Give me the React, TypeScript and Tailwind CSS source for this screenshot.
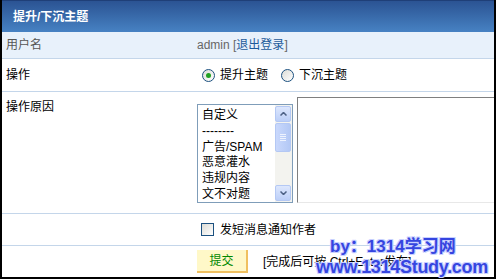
import React from "react";

const font = { fontFamily: '"Liberation Sans", "Noto Sans CJK SC", sans-serif' };

function Radio({ checked }: { checked?: boolean }) {
  return (
    <span className="relative inline-flex h-[13px] w-[13px] shrink-0 items-center justify-center rounded-full border border-[#1c5180] bg-gradient-to-br from-[#dcdcd6] to-white">
      {checked && <span className="h-[5px] w-[5px] rounded-full bg-[#21a121]" />}
    </span>
  );
}

const wm = {
  fontFamily: '"Liberation Sans", "Noto Sans CJK SC", sans-serif',
  textShadow: "1px 1px 0 #c8d0ff, -1px -1px 0 #c8d0ff, 1px -1px 0 #c8d0ff, -1px 1px 0 #c8d0ff",
};

export default function App() {
  const items = ["自定义", "--------", "广告/SPAM", "恶意灌水", "违规内容", "文不对题"];
  return (
    <div className="relative h-[279px] w-[496px] overflow-hidden bg-white text-[12px] leading-none" style={font}>
      <div className="flex h-full w-full flex-col border-b-2 border-l-2 border-r-2 border-black">
        {/* header */}
        <div className="flex h-[32px] shrink-0 items-center border-t border-[#1f3f78] bg-gradient-to-b from-[#2b5393] to-[#4782c3] pl-[11px] font-bold text-white">
          提升/下沉主题
        </div>
        {/* row 1 */}
        <div className="flex h-[27px] shrink-0 items-center border-b border-[#c4d6ea] bg-[#e8f1fb]">
          <div className="w-[195px] shrink-0 pl-[4px] text-[#555]">用户名</div>
          <div className="text-[#666]">
            admin [<span className="text-[#1c5a9a]">退出登录</span>]
          </div>
        </div>
        {/* row 2 */}
        <div className="flex h-[33px] shrink-0 items-center border-b border-[#c4d6ea]">
          <div className="w-[195px] shrink-0 pl-[4px] text-black">操作</div>
          <div className="flex items-center pl-[5px] text-black">
            <Radio checked />
            <span className="ml-[5px]">提升主题</span>
            <span className="ml-[13px] flex"><Radio /></span>
            <span className="ml-[5px]">下沉主题</span>
          </div>
        </div>
        {/* row 3 */}
        <div className="flex h-[122px] shrink-0 overflow-hidden border-b border-[#c4d6ea]">
          <div className="w-[195px] shrink-0 pl-[4px] pt-[9px] text-black">操作原因</div>
          <div className="flex shrink-0 items-start">
            <div className="mt-[12px] flex h-[99px] w-[96px] shrink-0 border border-[#7f9db9] bg-white">
              <div className="flex flex-1 flex-col pl-[4px] pt-[2px]">
                {items.map((t) => (
                  <div key={t} className="flex h-[16px] items-center whitespace-nowrap text-black">{t}</div>
                ))}
              </div>
              <div className="flex w-[17px] shrink-0 flex-col bg-[#f3f3ef] py-[1px] pr-[1px]">
                <div className="flex h-[16px] items-center justify-center rounded-[2px] border border-[#b4c8f4] bg-gradient-to-b from-[#dde7fd] to-[#bccff8]">
                  <svg width="7" height="4" viewBox="0 0 7 4"><path d="M0.5 3.5 L3.5 0.5 L6.5 3.5" stroke="#4d6185" strokeWidth="1.5" fill="none" /></svg>
                </div>
                <div className="mt-[1px] flex h-[29px] flex-col items-center justify-center gap-[1px] rounded-[2px] border border-[#b4c8f4] bg-gradient-to-r from-[#c9d8fc] to-[#b3c8f5]">
                  <div className="h-px w-[6px] bg-[#eef3fe]" />
                  <div className="h-px w-[6px] bg-[#eef3fe]" />
                  <div className="h-px w-[6px] bg-[#eef3fe]" />
                  <div className="h-px w-[6px] bg-[#eef3fe]" />
                </div>
                <div className="flex-1" />
                <div className="flex h-[16px] items-center justify-center rounded-[2px] border border-[#b4c8f4] bg-gradient-to-b from-[#dde7fd] to-[#bccff8]">
                  <svg width="7" height="4" viewBox="0 0 7 4"><path d="M0.5 0.5 L3.5 3.5 L6.5 0.5" stroke="#4d6185" strokeWidth="1.5" fill="none" /></svg>
                </div>
              </div>
            </div>
            <div className="ml-[4px] mt-[5px] h-[106px] w-[220px] shrink-0 border-b border-l border-t border-[#7f7f7f] border-b-[#e8e8e8] bg-white" />
          </div>
        </div>
        {/* row 4 */}
        <div className="flex h-[32px] shrink-0 items-center border-b border-[#c4d6ea]">
          <div className="w-[195px] shrink-0" />
          <div className="flex items-center pl-[4px] text-black">
            <span className="h-[13px] w-[13px] shrink-0 border border-[#1c5180] bg-gradient-to-br from-[#dcdcd6] to-white" />
            <span className="ml-[6px]">发短消息通知作者</span>
          </div>
        </div>
        {/* row 5 */}
        <div className="flex flex-1 items-center">
          <div className="w-[195px] shrink-0" />
          <div className="flex items-center">
            <div className="flex h-[23px] w-[51px] shrink-0 items-center justify-center border-b-2 border-r-2 border-[#f0c060] bg-[#fff8c8] text-[#008800]">
              提交
            </div>
            <span className="ml-[15px] whitespace-nowrap text-black">[完成后可按 Ctrl+Enter发布]</span>
          </div>
        </div>
      </div>
      {/* watermark */}
      <div className="absolute left-[330px] top-[238px] whitespace-nowrap text-[17px] font-bold leading-none text-[#3545e0]" style={wm}>
        by：1314学习网
      </div>
      <div className="absolute left-[316px] top-[258px] whitespace-nowrap text-[18px] font-bold leading-none tracking-[-0.3px] text-[#3545e0]" style={wm}>
        www.1314Study.com
      </div>
    </div>
  );
}
